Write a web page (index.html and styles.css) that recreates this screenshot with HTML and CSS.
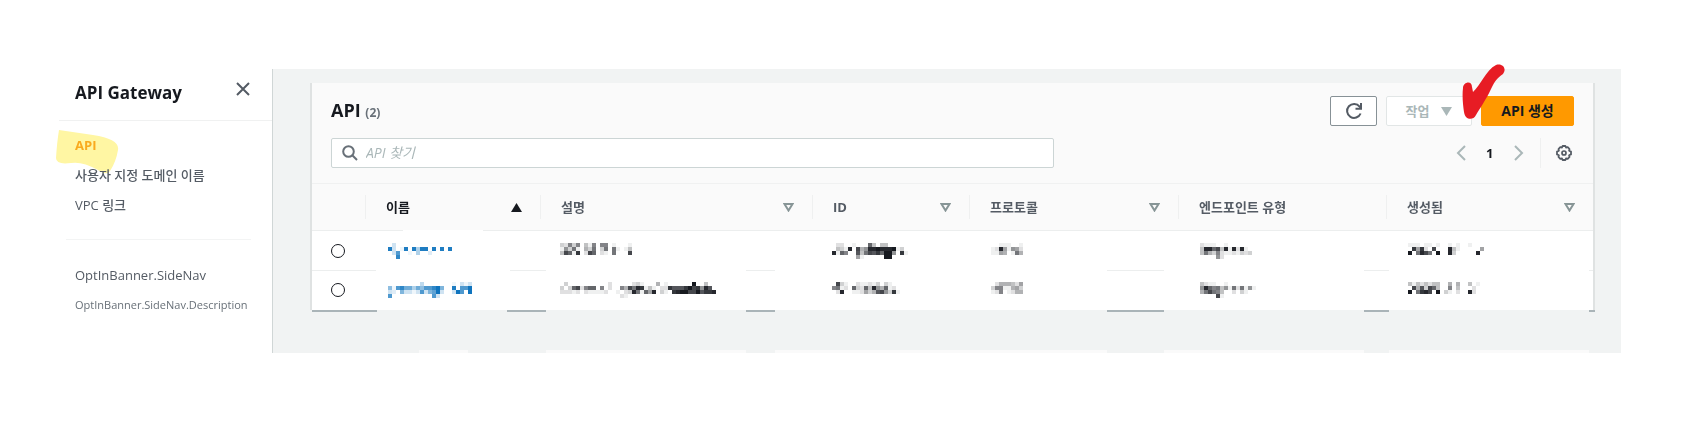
FILE: index.html
```html
<!DOCTYPE html>
<html lang="ko">
<head>
<meta charset="utf-8">
<title>API Gateway</title>
<link rel="stylesheet" href="styles.css">
</head>
<body>
<div class="app">
  <aside class="sidebar">
    <header class="side-head">
      <h1 class="side-title">API Gateway</h1>
      <button class="icon-btn" type="button" aria-label="닫기">
        <svg width="16" height="16" viewBox="0 0 16 16"><path d="M2 2l12 12M14 2L2 14" fill="none" stroke="#545b64" stroke-width="2"/></svg>
      </button>
    </header>
    <nav class="side-nav">
      <a class="side-link current" href="#">API
        <svg class="marker" width="64" height="46" viewBox="55 129 64 46"><path d="M59 130L93 135Q120 139 118 150Q116 162 110 171Q107 176 98 170Q82 161 71 163Q56 165 56 158Q57 142 59 130Z" fill="#fff6a3"/></svg>
      </a>
      <a class="side-link" href="#">사용자 지정 도메인 이름</a>
      <a class="side-link" href="#">VPC 링크</a>
    </nav>
    <div class="side-note">
      <p class="note-title">OptInBanner.SideNav</p>
      <p class="note-text">OptInBanner.SideNav.Description</p>
    </div>
  </aside>
  <main class="main">
    <section class="panel">
      <div class="panel-head">
        <div class="head-row">
          <h2 class="panel-title">API <span class="count">(2)</span></h2>
          <div class="actions">
            <button class="btn refresh" type="button" aria-label="새로 고침">
              <svg width="18" height="18" viewBox="0 0 18 18"><path d="M15.600 11.500A7 7 0 1 1 14.600 4.600L16 6.300" fill="none" stroke="#545b64" stroke-width="2"/><path d="M16 1v5.700h-5.500" fill="none" stroke="#545b64" stroke-width="2"/></svg>
            </button>
            <button class="btn menu" type="button" disabled>작업
              <svg width="11" height="9" viewBox="0 0 11 9"><path d="M0 0h11L5.500 9z" fill="#aab7b8"/></svg>
            </button>
            <button class="btn primary" type="button">API 생성
              <svg class="check" width="44" height="58" viewBox="0 0 44 58"><path d="M1 24C1 18 10 16 10 23L11 28C18 22 24 6 34 1C41 -1 45 5 41 10C35 14 33 17 29 25C25 34 17 46 14 51C11 57 3 56 2 48C1 41 0 32 1 24Z" fill="#e71c24"/></svg>
            </button>
          </div>
        </div>
        <div class="head-row">
          <label class="search">
            <svg width="16" height="16" viewBox="0 0 16 16"><circle cx="6.500" cy="6.500" r="5.300" fill="none" stroke="#687078" stroke-width="2"/><path d="M10.300 10.300L15 15" stroke="#687078" stroke-width="2"/></svg>
            <input class="search-input" type="text" placeholder="API 찾기" aria-label="API 찾기">
          </label>
          <div class="pager">
            <button class="icon-btn" type="button" aria-label="이전"><svg width="10" height="16" viewBox="0 0 10 16"><path d="M9 1L2 8l7 7" fill="none" stroke="#aab7b8" stroke-width="2"/></svg></button>
            <span class="page">1</span>
            <button class="icon-btn" type="button" aria-label="다음"><svg width="10" height="16" viewBox="0 0 10 16"><path d="M1 1l7 7-7 7" fill="none" stroke="#aab7b8" stroke-width="2"/></svg></button>
            <button class="icon-btn gear" type="button" aria-label="설정"><svg width="16" height="16" viewBox="0 0 16 16" fill="none" stroke="#545b64"><path d="M6.600 1h2.800l.6 1.500 1.700-.4 1.800 1.900-.4 1.700 1.900.9v2.800l-1.900.9.4 1.700-1.800 1.900-1.700-.4-.6 1.500H6.600L6 13.500l-1.700.4L2.500 12l.4-1.700L1 9.400V6.600l1.900-.9L2.500 4l1.800-1.900 1.700.4z" stroke-width="1.800" stroke-linejoin="round"/><circle cx="8" cy="8" r="2" stroke-width="1.700"/></svg></button>
          </div>
        </div>
      </div>
      <table class="table">
        <colgroup><col class="c-pick"><col class="c-name"><col class="c-desc"><col class="c-id"><col class="c-proto"><col class="c-end"><col></colgroup>
        <thead>
          <tr>
            <th></th>
            <th class="sorted"><div class="th">이름<svg width="11" height="9" viewBox="0 0 11 9"><path d="M0 9h11L5.500 0z" fill="#16191f"/></svg></div></th>
            <th><div class="th">설명<svg width="11" height="9" viewBox="0 0 11 9"><path d="M1.500 1h8L5.500 7.500z" fill="none" stroke="#879596" stroke-width="2"/></svg></div></th>
            <th><div class="th">ID<svg width="11" height="9" viewBox="0 0 11 9"><path d="M1.500 1h8L5.500 7.500z" fill="none" stroke="#879596" stroke-width="2"/></svg></div></th>
            <th><div class="th">프로토콜<svg width="11" height="9" viewBox="0 0 11 9"><path d="M1.500 1h8L5.500 7.500z" fill="none" stroke="#879596" stroke-width="2"/></svg></div></th>
            <th><div class="th">엔드포인트 유형</div></th>
            <th><div class="th">생성됨<svg width="11" height="9" viewBox="0 0 11 9"><path d="M1.500 1h8L5.500 7.500z" fill="none" stroke="#879596" stroke-width="2"/></svg></div></th>
          </tr>
        </thead>
        <tbody>
          <tr>
            <td><input class="radio" type="radio" name="api" aria-label="API 1"></td>
            <td><svg class="mosaic link" data-cells="03|e301e0e5ee0e0e0e|03b00105002|00d"></svg></td>
            <td><svg class="mosaic" data-cells="328380418088010001|173910539039091014|4ca1d02ca02109000c"></svg></td>
            <td><svg class="mosaic" data-cells="022001000a4044|0431e0c57eefeeef130|e1a800b49cbdaff70d1|0000006100000ff"></svg></td>
            <td><svg class="mosaic" data-cells="00111001|12e61762|1165019500"></svg></td>
            <td><svg class="mosaic" data-cells="2111001|4eeac4e1e2e1|4953821121323|00007200"></svg></td>
            <td><svg class="mosaic" data-cells="1110110100101001|0d6d20c000e4100000 6|f09ec90f00e300000e"></svg></td>
          </tr>
          <tr>
            <td><input class="radio" type="radio" name="api" aria-label="API 2"></td>
            <td><svg class="mosaic link" data-cells="000000004000000010313|71bd99597bbdf800e0bbf|32083313b38af3003fb0f|b0000000000b3"></svg></td>
            <td><svg class="mosaic" data-cells="030000000000200000231000501000000f00400|303ac28aa08020085c9ed141022dbbbdfcd7eb|222120211112001023e91a6e0310deffccfbdde|0000000000000002100"></svg></td>
            <td><svg class="mosaic" data-cells="0c3100211213031|89120a32a4e75a12|02e00112635bc73d1"></svg></td>
            <td><svg class="mosaic" data-cells="02555426|38811563|12801255"></svg></td>
            <td><svg class="mosaic" data-cells="4211001|7ea89471929171|59c9840020310|0000c1"></svg></td>
            <td><svg class="mosaic" data-cells="414242440050500401|0c5b3ca400804000200|f09dec0f0310200e2"></svg></td>
          </tr>
        </tbody>
      </table>
    </section>
    <div class="fade-strip"></div>
  </main>
</div>
<script src="mosaic.js"></script>
</body>
</html>
```
FILE: mosaic.js
```js
// Each hex digit in data-cells is the darkness of one 4px cell; "|" starts a new row.
document.querySelectorAll('.mosaic').forEach(function (svg) {
  var size = 4;
  svg.dataset.cells.replace(/ /g, '').split('|').forEach(function (row, y) {
    row.split('').forEach(function (level, x) {
      if (level === '0') return;
      var cell = document.createElementNS('http://www.w3.org/2000/svg', 'rect');
      cell.setAttribute('x', x * size);
      cell.setAttribute('y', y * size);
      cell.setAttribute('width', size);
      cell.setAttribute('height', size);
      cell.setAttribute('fill-opacity', parseInt(level, 16) / 15);
      svg.appendChild(cell);
    });
  });
});
```
FILE: styles.css
```css
* { box-sizing: border-box; }
body {
  margin: 0;
  padding: 69px 67px 0 59px;
  background: #fff;
  color: #16191f;
  font: 14px/20px "Open Sans", "Noto Sans CJK KR", sans-serif;
}
h1, h2, p { margin: 0; }
button, input { font: inherit; margin: 0; }
svg { display: block; flex: none; }
.app { display: flex; }
.sidebar { flex: 0 0 213px; }
.side-head {
  display: flex;
  justify-content: space-between;
  align-items: flex-start;
  height: 52px;
  padding: 12px 21px 0 16px;
  border-bottom: 1px solid #f0f1f1;
}
.side-title { font-size: 17px; line-height: 24px; font-weight: 700; }
.icon-btn { padding: 0; border: 0; background: none; cursor: pointer; }
.side-nav {
  display: flex;
  flex-direction: column;
  align-items: flex-start;
  gap: 10px;
  margin: 0 21px 0 7px;
  padding: 14px 0 24px 9px;
  border-bottom: 1px solid #f3f4f4;
}
.side-link { position: relative; color: #545b64; font-size: 13px; font-weight: 500; text-decoration: none; }
.side-link.current { color: #f9b02e; font-weight: 700; }
.marker { position: absolute; left: -20px; top: -6px; mix-blend-mode: multiply; }
.side-note { padding: 25px 0 0 16px; color: #545b64; font-weight: 500; }
.note-title { font-size: 13px; }
.note-text { margin-top: 10px; color: #687078; font-size: 11px; }
.main {
  flex: 1;
  min-width: 0;
  padding: 14px 26px 0 37px;
  border-left: 1px solid #d0d6d6;
  background: #f1f3f3;
}
.panel {
  border: solid #dfe2e2;
  border-width: 0 2px;
  background: #fafafa;
}
.panel-head { display: flex; flex-direction: column; gap: 12px; padding: 13px 19px 15px; }
.head-row { display: flex; justify-content: space-between; align-items: center; height: 30px; }
.panel-title { font-size: 18px; line-height: 24px; }
.count { color: #687078; font-size: 12px; }
.actions { display: flex; gap: 9px; }
.btn {
  position: relative;
  display: flex;
  align-items: center;
  justify-content: center;
  height: 30px;
  padding: 0;
  border: 1px solid #879196;
  border-radius: 2px;
  background: #fff;
  font-size: 14px;
  font-weight: 700;
  white-space: nowrap;
}
.refresh { width: 47px; }
.menu { gap: 12px; width: 86px; border-color: #e2e6e6; color: #aab7b8; font-size: 13px; }
.primary { width: 93px; border-color: #ff9900; background: #ff9900; color: #16191f; }
.check { position: absolute; left: -20px; top: -33px; }
.search {
  display: flex;
  align-items: center;
  gap: 8px;
  flex: 0 1 723px;
  height: 30px;
  padding: 0 10px;
  border: 1px solid #ccd5d5;
  border-radius: 2px;
  background: #fff;
}
.search-input { flex: 1; min-width: 0; padding: 0; border: 0; outline: 0; background: none; font-size: 14px; }
.search-input::placeholder { color: #aab7b8; font-style: italic; opacity: 1; }
.pager { display: flex; align-items: center; gap: 20px; height: 30px; }
.page { width: 8px; font-size: 13px; font-weight: 700; }
.page + .icon-btn { margin-right: -4px; }
.gear { padding: 7px 2px 7px 15px; border-left: 1px solid #eff0f0; }
.table {
  width: 100%;
  border-collapse: collapse;
  border-top: 1px solid #f0f1f1;
  table-layout: fixed;
}
.c-pick { width: 53px; }
.c-name { width: 175px; }
.c-desc { width: 272px; }
.c-id { width: 157px; }
.c-proto { width: 209px; }
.c-end { width: 208px; }
th, td { padding: 0; text-align: left; }
thead tr { height: 47px; background: linear-gradient(90deg, #eceeee 91px, #fff 91px 171px, #eceeee 171px) bottom / 100% 1px no-repeat; }
.th {
  display: flex;
  align-items: center;
  justify-content: space-between;
  height: 24px;
  padding: 0 18px 0 20px;
  border-left: 1px solid #eff0f0;
  color: #545b64;
  font-size: 13px;
}
.sorted .th { color: #16191f; }
tbody tr { height: 39px; background: #fff; }
tbody tr:first-child {
  height: 40px;
  background: linear-gradient(90deg, #eceeee 64px, #fff 64px 198px, #eceeee 198px 234px, #fff 234px 434px, #eceeee 434px 463px, #fff 463px 795px, #eceeee 795px 852px, #fff 852px 1052px, #eceeee 1052px 1077px, #fff 1077px 1277px, #eceeee 1277px) bottom / 100% 1px no-repeat #fff;
}
td { padding-left: 20px; }
.radio {
  display: block;
  appearance: none;
  width: 14px;
  height: 14px;
  margin-left: -1px;
  border: 1px solid #16191f;
  border-radius: 50%;
  background: #fff;
}
.mosaic { width: 160px; height: 16px; fill: #16191f; max-width: 100%; }
.mosaic.link { margin-left: 3px; fill: #0f74be; }
td:nth-child(n+5) .mosaic { margin-left: 2px; }
.fade-strip {
  height: 43px;
  margin: 0 0 0 2px;
  background:
    linear-gradient(90deg, #aab4b8 65px, transparent 65px 195px, #aab4b8 195px 234px, transparent 234px 434px, #aab4b8 434px 463px, transparent 463px 795px, #aab4b8 795px 852px, transparent 852px 1052px, #aab4b8 1052px 1077px, transparent 1077px 1277px, #aab4b8 1277px) top / 100% 2px no-repeat,
    linear-gradient(90deg, transparent 107px, #fafafa 107px 156px, transparent 156px 234px, #fafafa 234px 434px, transparent 434px 463px, #fafafa 463px 795px, transparent 795px 852px, #fafafa 852px 1052px, transparent 1052px 1077px, #fafafa 1077px 1277px, transparent 1277px) bottom / 100% 3px no-repeat;
}
```
